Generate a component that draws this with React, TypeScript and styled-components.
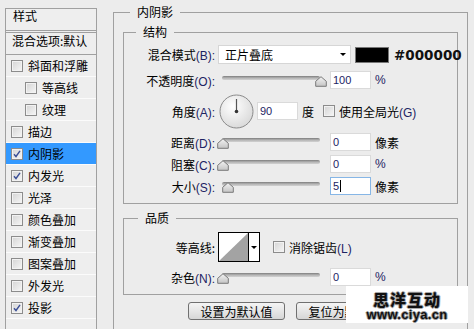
import React from "react";
import styled, { createGlobalStyle } from "styled-components";

const GlobalStyle = createGlobalStyle`
  html, body {
    margin: 0;
    padding: 0;
  }
  body {
    width: 474px;
    height: 329px;
    overflow: hidden;
    background: #ececec;
    font-family: "Noto Sans CJK SC", "Liberation Sans", sans-serif;
    font-size: 12px;
    color: #000;
  }
`;

// layout ================================================
const Dialog = styled.div`
  position: relative;
  display: flex;
  align-items: flex-start;
  width: 474px;
  height: 329px;
  overflow: hidden;
  background: #ececec;
`;

const StyleList = styled.div`
  flex: 0 0 auto;
  width: 90px;
  height: 340px;
  margin: 8px 0 0 5px;
  border: 1px solid #a0a0a0;
  background: #eeeeee;
`;

const ListHeader = styled.div`
  height: 21px;
  padding-left: 7px;
  line-height: 14px;
  border-bottom: 3px double #a0a0a0;
`;

const BlendRow = styled.div`
  height: 20px;
  padding: 1px 0 0 6px;
  line-height: 14px;
  border-bottom: 1px solid #a0a0a0;
`;

const ListItem = styled.div<{ $indent?: boolean; $active?: boolean }>`
  display: flex;
  align-items: center;
  gap: 5px;
  height: 21px;
  padding-left: ${(p) => (p.$indent ? 19 : 5)}px;
  border-bottom: 1px solid #fbfbfb;
  background: ${(p) => (p.$active ? "#3399ff" : "transparent")};
`;

const Group = styled.fieldset<{ $outer?: boolean }>`
  box-sizing: border-box;
  margin: 0;
  min-width: 0;
  border: 1px solid #a0a0a0;
  padding: 0 ${(p) => (p.$outer ? 9 : 0)}px;
`;

const OuterGroup = styled(Group)`
  flex: 0 0 auto;
  width: 355px;
  height: 360px;
  margin: 4px 0 0 16px;
`;

const InnerGroup = styled(Group)<{ $mt: number; $pb: number }>`
  margin-top: ${(p) => p.$mt}px;
  padding-bottom: ${(p) => p.$pb}px;
`;

const Legend = styled.legend<{ $ml: number }>`
  margin-left: ${(p) => p.$ml}px;
  padding: 0 7px;
  line-height: 16px;
  font-size: 12px;
`;

const Row = styled.div<{ $h: number; $mt: number }>`
  display: flex;
  align-items: center;
  height: ${(p) => p.$h}px;
  margin-top: ${(p) => p.$mt}px;
`;

const Label = styled.div`
  flex: 0 0 91px;
  margin-right: 3px;
  text-align: right;
  white-space: nowrap;
`;

const Key = styled.span`
  font-family: "Liberation Sans", sans-serif;
  font-size: 12px;
  color: #1d2363;
`;

const Unit = styled.span<{ $ml?: number }>`
  margin-left: ${(p) => p.$ml ?? 4}px;
  white-space: nowrap;
`;

const UnitLatin = styled(Key)<{ $ml?: number }>`
  margin-left: ${(p) => p.$ml ?? 4}px;
`;

// controls ==============================================
const Select = styled.div`
  box-sizing: border-box;
  flex: 0 0 auto;
  display: flex;
  align-items: center;
  justify-content: space-between;
  width: 133px;
  height: 19px;
  padding: 0 4px 0 6px;
  background: #fff;
  border: 1px solid #d6d6d6;
`;

const Caret = styled.span`
  width: 0;
  height: 0;
  border-left: 3px solid transparent;
  border-right: 3px solid transparent;
  border-top: 3px solid #000;
`;

const Swatch = styled.div`
  box-sizing: border-box;
  flex: 0 0 auto;
  width: 34px;
  height: 16px;
  margin-left: 4px;
  background: #000;
  border: 1px solid #777;
`;

const Hex = styled.span`
  margin-left: 5px;
  font-family: "DejaVu Sans", sans-serif;
  font-weight: bold;
  font-size: 13.5px;
  color: #111;
  white-space: nowrap;
`;

const NumInput = styled.div<{ $focus?: boolean; $ml?: number }>`
  box-sizing: border-box;
  flex: 0 0 auto;
  display: flex;
  align-items: center;
  width: 41px;
  height: 18px;
  margin-left: ${(p) => p.$ml ?? 4}px;
  padding-left: 2px;
  background: #fff;
  border: 1px solid ${(p) => (p.$focus ? "#86b6e6" : "#dadada")};
  font-family: "Liberation Sans", sans-serif;
  font-size: 11px;
  color: #1d2363;
`;

const TextCaret = styled.span`
  display: inline-block;
  width: 1px;
  height: 12px;
  margin-left: 1px;
  background: #000;
`;

const SliderBox = styled.div`
  position: relative;
  flex: 0 0 108px;
  height: 18px;
`;

const Track = styled.div`
  position: absolute;
  left: 4px;
  top: 5px;
  width: 98px;
  height: 4px;
  border-radius: 2px;
  background: linear-gradient(#7d7d7d, #b4b4b4 50%, #d2d2d2);
`;

const ThumbWrap = styled.svg`
  position: absolute;
  top: 5px;
`;

const DialSvg = styled.svg`
  flex: 0 0 auto;
  margin-left: 1px;
`;

const Box = styled.span<{ $ml?: number }>`
  position: relative;
  box-sizing: border-box;
  flex: 0 0 auto;
  display: inline-flex;
  align-items: center;
  justify-content: center;
  width: 12px;
  height: 12px;
  margin-left: ${(p) => p.$ml ?? 0}px;
  border: 1px solid #8c8c8c;
  background: linear-gradient(135deg, #d4d4d4, #f6f6f6);
  box-shadow: inset 0 0 0 1px #f2f2f2;
`;

const CheckText = styled.span`
  margin-left: 4px;
  white-space: nowrap;
`;

const Contour = styled.div`
  display: flex;
  flex: 0 0 auto;
  width: 42px;
  height: 30px;
  box-sizing: border-box;
  border: 1px solid #000;
  background: #fff;
`;

const ContourArrow = styled.div`
  flex: 1;
  display: flex;
  align-items: center;
  justify-content: center;
  border-left: 1px solid #000;
`;

const ButtonRow = styled.div`
  display: flex;
  justify-content: center;
  gap: 11px;
  margin-top: 7px;
`;

const Button = styled.div`
  box-sizing: border-box;
  width: 97px;
  height: 18px;
  display: flex;
  align-items: center;
  justify-content: center;
  border: 1px solid #707070;
  border-radius: 3px;
  background: linear-gradient(#f4f4f4, #e6e6e6 50%, #d6d6d6);
  white-space: nowrap;
`;

const Watermark = styled.div`
  position: absolute;
  left: 346px;
  top: 286px;
  width: 122px;
  height: 37px;
  box-sizing: border-box;
  padding-top: 4px;
  background: #fff;
  display: flex;
  flex-direction: column;
  align-items: center;
`;

const MarkTitle = styled.div`
  font-family: "Noto Sans CJK SC", sans-serif;
  font-weight: 900;
  font-size: 16px;
  line-height: 18px;
  height: 18px;
  letter-spacing: 1px;
  color: #111;
  text-shadow: 1px 0 0 #aaa, -1px 0 0 #aaa, 0 1px 0 #aaa, 0 -1px 0 #aaa;
`;

const MarkUrl = styled.div`
  margin-top: 1px;
  font-family: "Liberation Sans", sans-serif;
  font-weight: bold;
  font-size: 13px;
  line-height: 11px;
  height: 11px;
  letter-spacing: 0.3px;
  color: #111;
  text-shadow: 1px 0 0 #999, -1px 0 0 #999, 0 1px 0 #999, 0 -1px 0 #999;
`;

// parts =================================================
function Check({ on, ml }: { on?: boolean; ml?: number }) {
  return (
    <Box $ml={ml}>
      {on && (
        <svg width="8" height="8" viewBox="0 0 8 8">
          <path d="M1 4.2 L3 6.5 L7 0.8" fill="none" stroke="#3b4f96" strokeWidth="1.4" />
        </svg>
      )}
    </Box>
  );
}

function Slider({ pct }: { pct: number }) {
  const left = 4 + (pct / 100) * 98 - 5.5;
  return (
    <SliderBox>
      <Track />
      <ThumbWrap width="12" height="11" viewBox="0 0 12 11" style={{ left }}>
        <defs>
          <linearGradient id="thumbFill" x1="0" y1="0" x2="0" y2="1">
            <stop offset="0" stopColor="#f4f4f4" />
            <stop offset="1" stopColor="#c4c4c4" />
          </linearGradient>
        </defs>
        <path d="M6 0.7 L11.3 5.3 V10.3 H0.7 V5.3 Z" fill="url(#thumbFill)" stroke="#7a7a7a" strokeWidth="1" />
      </ThumbWrap>
    </SliderBox>
  );
}

function Dial() {
  return (
    <DialSvg width="35" height="35" viewBox="0 0 35 35">
      <defs>
        <radialGradient id="dialFill" cx="0.4" cy="0.35" r="0.7">
          <stop offset="0" stopColor="#ffffff" />
          <stop offset="1" stopColor="#d8d8d8" />
        </radialGradient>
      </defs>
      <circle cx="17.5" cy="17.5" r="16.5" fill="url(#dialFill)" stroke="#8a8a8a" />
      <line x1="17.5" y1="17.5" x2="17.5" y2="5" stroke="#555" strokeWidth="1.2" />
      <circle cx="17.5" cy="17.5" r="1.8" fill="#333" />
    </DialSvg>
  );
}

const styleItems: { name: string; on?: boolean; indent?: boolean; active?: boolean }[] = [
  { name: "斜面和浮雕" },
  { name: "等高线", indent: true },
  { name: "纹理", indent: true },
  { name: "描边" },
  { name: "内阴影", on: true, active: true },
  { name: "内发光", on: true },
  { name: "光泽" },
  { name: "颜色叠加" },
  { name: "渐变叠加" },
  { name: "图案叠加" },
  { name: "外发光" },
  { name: "投影", on: true },
];

export default function App() {
  return (
    <Dialog>
      <GlobalStyle />
      <StyleList>
        <ListHeader>样式</ListHeader>
        <BlendRow>混合选项:默认</BlendRow>
        {styleItems.map((it) => (
          <ListItem key={it.name} $indent={it.indent} $active={it.active}>
            <Check on={it.on} />
            <span>{it.name}</span>
          </ListItem>
        ))}
      </StyleList>

      <OuterGroup $outer>
        <Legend $ml={7}>内阴影</Legend>

        <InnerGroup $mt={4} $pb={8}>
          <Legend $ml={12}>结构</Legend>
          <Row $h={19} $mt={5}>
            <Label>混合模式<Key>(B):</Key></Label>
            <Select>
              <span>正片叠底</span>
              <Caret />
            </Select>
            <Swatch />
            <Hex>#000000</Hex>
          </Row>
          <Row $h={18} $mt={7}>
            <Label>不透明度<Key>(O):</Key></Label>
            <Slider pct={100} />
            <NumInput>100</NumInput>
            <UnitLatin>%</UnitLatin>
          </Row>
          <Row $h={34} $mt={5}>
            <Label>角度<Key>(A):</Key></Label>
            <Dial />
            <NumInput $ml={3}>90</NumInput>
            <Unit>度</Unit>
            <Check ml={9} />
            <CheckText>使用全局光<Key>(G)</Key></CheckText>
          </Row>
          <Row $h={18} $mt={5}>
            <Label>距离<Key>(D):</Key></Label>
            <Slider pct={0} />
            <NumInput>0</NumInput>
            <Unit>像素</Unit>
          </Row>
          <Row $h={18} $mt={4}>
            <Label>阻塞<Key>(C):</Key></Label>
            <Slider pct={0} />
            <NumInput>0</NumInput>
            <UnitLatin>%</UnitLatin>
          </Row>
          <Row $h={18} $mt={4}>
            <Label>大小<Key>(S):</Key></Label>
            <Slider pct={5.5} />
            <NumInput $focus>
              5<TextCaret />
            </NumInput>
            <Unit>像素</Unit>
          </Row>
        </InnerGroup>

        <InnerGroup $mt={6} $pb={8}>
          <Legend $ml={14}>品质</Legend>
          <Row $h={30} $mt={6}>
            <Label>等高线:</Label>
            <Contour>
              <svg width="29" height="28" viewBox="0 0 29 28">
                <polygon points="0,28 29,0 29,28" fill="#a3a3a3" />
              </svg>
              <ContourArrow>
                <Caret />
              </ContourArrow>
            </Contour>
            <Check ml={13} />
            <CheckText>消除锯齿<Key>(L)</Key></CheckText>
          </Row>
          <Row $h={18} $mt={6}>
            <Label>杂色<Key>(N):</Key></Label>
            <Slider pct={0} />
            <NumInput>0</NumInput>
            <UnitLatin>%</UnitLatin>
          </Row>
        </InnerGroup>

        <ButtonRow>
          <Button>设置为默认值</Button>
          <Button>复位为默认值</Button>
        </ButtonRow>
      </OuterGroup>

      <Watermark>
        <MarkTitle>思洋互动</MarkTitle>
        <MarkUrl>www.ciya.cn</MarkUrl>
      </Watermark>
    </Dialog>
  );
}
